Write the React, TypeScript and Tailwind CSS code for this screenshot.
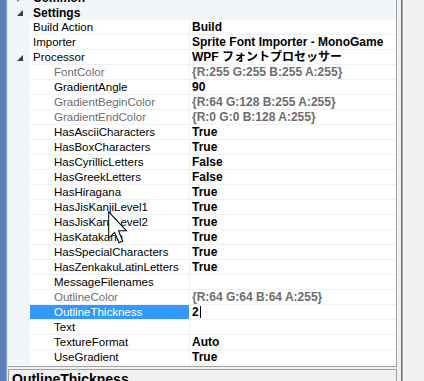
import React from "react";

type Row = {
  name: string;
  value?: string;
  level: 0 | 1;
  gray?: boolean;
  expanded?: boolean;
  selected?: boolean;
};

const rows: Row[] = [
  { name: "Build Action", value: "Build", level: 0 },
  { name: "Importer", value: "Sprite Font Importer - MonoGame", level: 0 },
  { name: "Processor", value: "WPF フォントプロセッサー", level: 0, expanded: true },
  { name: "FontColor", value: "{R:255 G:255 B:255 A:255}", level: 1, gray: true },
  { name: "GradientAngle", value: "90", level: 1 },
  { name: "GradientBeginColor", value: "{R:64 G:128 B:255 A:255}", level: 1, gray: true },
  { name: "GradientEndColor", value: "{R:0 G:0 B:128 A:255}", level: 1, gray: true },
  { name: "HasAsciiCharacters", value: "True", level: 1 },
  { name: "HasBoxCharacters", value: "True", level: 1 },
  { name: "HasCyrillicLetters", value: "False", level: 1 },
  { name: "HasGreekLetters", value: "False", level: 1 },
  { name: "HasHiragana", value: "True", level: 1 },
  { name: "HasJisKanjiLevel1", value: "True", level: 1 },
  { name: "HasJisKanjiLevel2", value: "True", level: 1 },
  { name: "HasKatakana", value: "True", level: 1 },
  { name: "HasSpecialCharacters", value: "True", level: 1 },
  { name: "HasZenkakuLatinLetters", value: "True", level: 1 },
  { name: "MessageFilenames", value: "", level: 1 },
  { name: "OutlineColor", value: "{R:64 G:64 B:64 A:255}", level: 1, gray: true },
  { name: "OutlineThickness", value: "2", level: 1, selected: true },
  { name: "Text", value: "", level: 1 },
  { name: "TextureFormat", value: "Auto", level: 1 },
  { name: "UseGradient", value: "True", level: 1 },
];

function Expanded() {
  return (
    <svg width="6" height="6" viewBox="0 0 6 6">
      <polygon points="6,0 6,6 0,6" fill="#3c3c3c" />
    </svg>
  );
}

function Collapsed() {
  return (
    <svg width="6" height="9" viewBox="0 0 6 9">
      <polygon points="0.5,0.5 5,4.5 0.5,8.5" fill="white" stroke="#8a8a8a" strokeWidth="1" />
    </svg>
  );
}

function Category({ name, open }: { name: string; open: boolean }) {
  return (
    <div className="flex h-[15px] items-center bg-[#f2f5fa]">
      <div className="w-[22px] pl-[9px] flex items-center">{open ? <Expanded /> : <Collapsed />}</div>
      <div className="pl-[3px] font-bold text-[12px] leading-[14px] text-black">{name}</div>
    </div>
  );
}

function PropRow({ r }: { r: Row }) {
  const nameColor = r.selected ? "text-white" : r.gray ? "text-[#6d6d6d]" : "text-black";
  return (
    <div className="flex h-[15px] shrink-0">
      <div className="w-[22px] shrink-0 bg-[#f2f5fa] pl-[9px] flex items-center">
        {r.expanded ? <Expanded /> : null}
      </div>
      <div
        className={`w-[160px] shrink-0 border-r border-b border-[#eef0f4] flex items-center text-[11.5px] leading-[14px] whitespace-nowrap overflow-hidden ${
          r.level === 0 ? "pl-[3px]" : "pl-[24px]"
        } ${r.selected ? "bg-[#3399ff]" : "bg-white"} ${nameColor}`}
      >
        {r.name}
      </div>
      <div
        className={`flex-1 border-b border-[#eef0f4] bg-white flex items-center pl-[2px] font-bold text-[12px] leading-[14px] whitespace-nowrap overflow-hidden ${
          r.gray ? "text-[#6d6d6d]" : "text-black"
        }`}
      >
        {r.value}
        {r.selected ? <span className="inline-block w-[1px] h-[12px] bg-black ml-[1px]" /> : null}
      </div>
    </div>
  );
}

export default function App() {
  return (
    <div
      className="relative w-[424px] h-[381px] bg-[#f0f0f0] flex overflow-hidden"
      style={{ fontFamily: '"Liberation Sans", "Noto Sans CJK JP", sans-serif' }}
    >
      <div className="w-[7px] h-full bg-[#5a7eba] border-r border-[#86a2d0]" />
      <div className="w-[1px] h-full bg-[#e6e6e6]" />
      <div className="w-[389px] h-full flex flex-col overflow-hidden">
        <div className="h-[367px] shrink-0 bg-white border-r border-b border-[#a0a0a0] overflow-hidden">
          <div className="-mt-[10px] flex flex-col">
            <Category name="Common" open={false} />
            <Category name="Settings" open={true} />
            {rows.map((r) => (
              <PropRow key={r.name} r={r} />
            ))}
          </div>
        </div>
        <div className="mt-[2px] h-[20px] shrink-0 border border-b-0 border-[#a0a0a0] bg-[#f0f0f0] pl-[3px] pt-[1px] overflow-hidden">
          <div className="font-bold text-[14px] leading-[17px] text-black whitespace-nowrap">OutlineThickness</div>
        </div>
      </div>
      <div className="w-[4px] h-full" />
      <div className="w-[2px] h-full bg-[#a8a8a8] border-l border-[#6e6e6e]" />

      <svg
        className="absolute left-[107px] top-[211px]"
        width="22"
        height="33"
        viewBox="0 0 12 19.5"
      >
        <path
          d="M0.5,0.5 L0.5,16 L4,12.6 L6.6,18.8 L8.8,17.9 L6.3,11.7 L11,11.7 Z"
          fill="white"
          stroke="black"
          strokeWidth="0.6"
          strokeLinejoin="miter"
        />
      </svg>
    </div>
  );
}
